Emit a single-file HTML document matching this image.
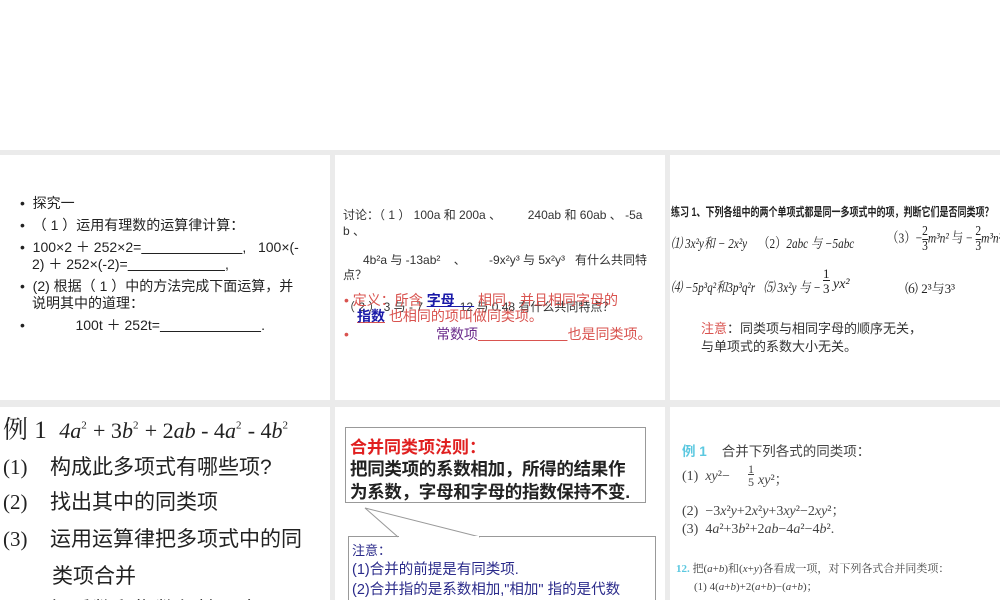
<!DOCTYPE html>
<html><head><meta charset="utf-8"><style>
*{margin:0;padding:0;box-sizing:border-box}
html,body{width:1000px;height:600px;overflow:hidden}
body{background:#fff;position:relative;font-family:"Liberation Sans","Noto Sans CJK SC",sans-serif;color:#222}
.g{position:absolute;background:#ebebeb}
.t{position:absolute;white-space:nowrap}
.s1{font-size:14px;line-height:17px}
.s2{font-size:12px;color:#333}
.red{color:#d9534f}
.blue{color:#1a1aa8}
.serif{font-family:"Liberation Serif","Noto Serif CJK SC",serif}
.b{position:absolute;border:1px solid #999;background:#fff}
.fr{display:inline-block;text-align:center;vertical-align:middle;line-height:14px;font-size:14px}
.fr span{display:block;border-top:1px solid #222}
.n{font-family:"Liberation Serif",serif;display:inline-block;width:47px}
</style></head><body>
<div class="g" style="left:0;top:150px;width:1000px;height:5px"></div>
<div class="g" style="left:0;top:400px;width:1000px;height:7px"></div>
<div class="g" style="left:330px;top:150px;width:5px;height:450px"></div>
<div class="g" style="left:665px;top:150px;width:5px;height:450px"></div>

<!-- slide 1 -->
<div class="t s1" style="left:20px;top:195px">•&nbsp;&nbsp;探究一</div>
<div class="t s1" style="left:20px;top:217px">•&nbsp;&nbsp;（ 1 ）运用有理数的运算律计算：</div>
<div class="t s1" style="left:20px;top:239px">•&nbsp;&nbsp;100×2 ＋ 252×2=<u>&nbsp;&nbsp;&nbsp;&nbsp;&nbsp;&nbsp;&nbsp;&nbsp;&nbsp;&nbsp;&nbsp;&nbsp;&nbsp;&nbsp;&nbsp;&nbsp;&nbsp;&nbsp;&nbsp;&nbsp;&nbsp;&nbsp;&nbsp;&nbsp;&nbsp;&nbsp;</u>,&nbsp;&nbsp;&nbsp;100×(-</div>
<div class="t s1" style="left:32px;top:256px">2) ＋ 252×(-2)=<u>&nbsp;&nbsp;&nbsp;&nbsp;&nbsp;&nbsp;&nbsp;&nbsp;&nbsp;&nbsp;&nbsp;&nbsp;&nbsp;&nbsp;&nbsp;&nbsp;&nbsp;&nbsp;&nbsp;&nbsp;&nbsp;&nbsp;&nbsp;&nbsp;&nbsp;</u>,</div>
<div class="t s1" style="left:20px;top:278px">•&nbsp;&nbsp;(2) 根据（ 1 ）中的方法完成下面运算，并</div>
<div class="t s1" style="left:32px;top:295px">说明其中的道理：</div>
<div class="t s1" style="left:20px;top:317px">•&nbsp;&nbsp;&nbsp;&nbsp;&nbsp;&nbsp;&nbsp;&nbsp;&nbsp;&nbsp;&nbsp;&nbsp;&nbsp;100t ＋ 252t=<u>&nbsp;&nbsp;&nbsp;&nbsp;&nbsp;&nbsp;&nbsp;&nbsp;&nbsp;&nbsp;&nbsp;&nbsp;&nbsp;&nbsp;&nbsp;&nbsp;&nbsp;&nbsp;&nbsp;&nbsp;&nbsp;&nbsp;&nbsp;&nbsp;&nbsp;&nbsp;</u>.</div>

<!-- slide 2 -->
<div class="t s2" style="left:343px;top:206px">讨论：（ 1 ） 100a 和 200a 、&nbsp;&nbsp;&nbsp;&nbsp;&nbsp;&nbsp;&nbsp;&nbsp;240ab 和 60ab 、 -5a</div>
<div class="t s2" style="left:343px;top:222px">b 、</div>
<div class="t s2" style="left:363px;top:251px">4b²a 与 -13ab²&nbsp;&nbsp;&nbsp;&nbsp;、&nbsp;&nbsp;&nbsp;&nbsp;&nbsp;&nbsp;&nbsp;-9x²y³ 与 5x²y³&nbsp;&nbsp;&nbsp;有什么共同特</div>
<div class="t s2" style="left:343px;top:266px">点？</div>
<div class="t s2" style="left:343px;top:298px">（ 2 ） 3 与 - 7&nbsp;&nbsp;&nbsp;&nbsp;&nbsp;&nbsp;&nbsp;&nbsp;&nbsp;&nbsp;&nbsp;12 与 0.48 有什么共同特点？</div>
<div class="t red" style="left:344px;top:290px;font-size:14px">•&nbsp;定义：所含 <span class="blue" style="font-weight:bold;text-decoration:underline">字母&nbsp;&nbsp;&nbsp;&nbsp;&nbsp;</span> 相同，并且相同字母的</div>
<div class="t red" style="left:357px;top:306px;font-size:14px"><span class="blue" style="font-weight:bold;text-decoration:underline;text-decoration-color:#d9534f">指数</span> 也相同的项叫做同类项。</div>
<div class="t red" style="left:344px;top:326px;font-size:14px">•</div>
<div class="t red" style="left:436px;top:324px;font-size:14px"><span style="color:#6a2a8a">常数项</span><u>&nbsp;&nbsp;&nbsp;&nbsp;&nbsp;&nbsp;&nbsp;&nbsp;&nbsp;&nbsp;&nbsp;&nbsp;&nbsp;&nbsp;&nbsp;&nbsp;&nbsp;&nbsp;&nbsp;&nbsp;&nbsp;&nbsp;&nbsp;</u>也是同类项。</div>

<!-- slide 3 -->
<div class="t" style="left:671px;top:203px;font-size:12px;font-weight:bold;transform:scaleX(.75);transform-origin:left">练习 1、下列各组中的两个单项式都是同一多项式中的项，判断它们是否同类项？</div>
<div class="t serif" style="left:671px;top:233px;font-size:14px;font-style:italic;transform:scaleX(.8);transform-origin:left">⑴ 3x²y和 − 2x²y&nbsp;&nbsp;&nbsp;&nbsp;<span style="font-style:normal">（2）</span>2abc 与 −5abc</div>
<div class="t serif" style="left:887px;top:225px;font-size:14px;transform:scaleX(.82);transform-origin:left"><span>（3）−</span><span class="fr">2<span>3</span></span><i>m³n²</i> 与 − <span class="fr">2<span>3</span></span><i>m³n²</i></div>
<div class="t serif" style="left:671px;top:277px;font-size:14px;font-style:italic;transform:scaleX(.8);transform-origin:left">⑷ −5p³q²和3p³q²r&nbsp;&nbsp;&nbsp;⑸ 3x²y 与 −</div>
<div class="t serif" style="left:823px;top:266px;font-size:13px;line-height:15px;text-align:center">1<br><span style="border-top:1px solid #222">3</span></div>
<div class="t serif" style="left:833px;top:277px;font-size:14px;font-style:italic">yx²</div>
<div class="t serif" style="left:905px;top:278px;font-size:13px">⑹ 2³与3³</div>
<div class="t" style="left:701px;top:318px;font-size:13px;color:#333"><span class="red">注意</span>：同类项与相同字母的顺序无关，</div>
<div class="t" style="left:701px;top:336px;font-size:13px;color:#333">与单项式的系数大小无关。</div>

<!-- slide 4 -->
<div class="t serif" style="left:3px;top:410px;font-size:25px">例 1&nbsp;&nbsp;<i style="font-size:22px">4a</i><sup style="font-size:11px">2</sup> <span style="font-size:22px">+ 3<i>b</i></span><sup style="font-size:11px">2</sup> <span style="font-size:22px">+ 2<i>ab</i> - 4<i>a</i></span><sup style="font-size:11px">2</sup> <span style="font-size:22px">- 4<i>b</i></span><sup style="font-size:11px">2</sup></div>
<div class="t" style="left:3px;top:451px;font-size:21px"><span class="n">(1)</span>构成此多项式有哪些项?</div>
<div class="t" style="left:3px;top:486px;font-size:21px"><span class="n">(2)</span>找出其中的同类项</div>
<div class="t" style="left:3px;top:523px;font-size:21px"><span class="n">(3)</span>运用运算律把多项式中的同</div>
<div class="t" style="left:52px;top:560px;font-size:21px">类项合并</div>
<div class="t" style="left:3px;top:594px;font-size:21px"><span class="n">(4)</span>把系数和指数保持不变</div>

<!-- slide 5 -->
<div class="b" style="left:345px;top:427px;width:301px;height:76px"></div>
<div class="t" style="left:350px;top:433px;font-size:17px;font-weight:bold;color:#e02020">合并同类项法则：</div>
<div class="t" style="left:350px;top:456px;font-size:17.5px;font-weight:bold;letter-spacing:-0.3px">把同类项的系数相加，所得的结果作</div>
<div class="t" style="left:350px;top:479px;font-size:17.5px;font-weight:bold;letter-spacing:-0.3px">为系数，字母和字母的指数保持不变.</div>
<div class="b" style="left:348px;top:536px;width:308px;height:70px;border-bottom:none"></div>
<svg style="position:absolute;left:340px;top:500px" width="320" height="40"><path d="M58 37 L25 8 L140 37" fill="none" stroke="#999" stroke-width="1"/><path d="M59 37 L139 37" stroke="#fff" stroke-width="2"/></svg>
<div class="t" style="left:352px;top:540px;font-size:13px;color:#2a2a8a">注意：</div>
<div class="t" style="left:352px;top:558px;font-size:14.5px;color:#2a2a8a">(1)合并的前提是有同类项.</div>
<div class="t" style="left:352px;top:578px;font-size:14.5px;color:#2a2a8a">(2)合并指的是系数相加,"相加" 指的是代数</div>

<!-- slide 6 -->
<div class="t" style="left:682px;top:440px;font-size:13.5px;color:#444"><span style="color:#5bc8e0;font-weight:bold">例 1</span>&nbsp;&nbsp;&nbsp;&nbsp;合并下列各式的同类项：</div>
<div class="t serif" style="left:682px;top:469px;font-size:14px;color:#444">(1)&nbsp;&nbsp;<i>xy</i>²−</div>
<div class="t serif" style="left:748px;top:463px;font-size:12px;line-height:13px;text-align:center;color:#444">1<br><span style="border-top:1px solid #444">5</span></div>
<div class="t serif" style="left:758px;top:469px;font-size:14px;color:#444"><i>xy</i>²；</div>
<div class="t serif" style="left:682px;top:500px;font-size:14px;color:#444">(2)&nbsp;&nbsp;−3<i>x</i>²<i>y</i>+2<i>x</i>²<i>y</i>+3<i>xy</i>²−2<i>xy</i>²；</div>
<div class="t serif" style="left:682px;top:522px;font-size:14px;color:#444">(3)&nbsp;&nbsp;4<i>a</i>²+3<i>b</i>²+2<i>ab</i>−4<i>a</i>²−4<i>b</i>².</div>
<div class="t serif" style="left:676px;top:560px;font-size:11px;color:#444"><span style="color:#5bc8e0;font-weight:bold">12.</span> 把(<i>a</i>+<i>b</i>)和(<i>x</i>+<i>y</i>)各看成一项，对下列各式合并同类项：</div>
<div class="t serif" style="left:694px;top:578px;font-size:11px;color:#444">(1) 4(<i>a</i>+<i>b</i>)+2(<i>a</i>+<i>b</i>)−(<i>a</i>+<i>b</i>)；</div>
</body></html>
